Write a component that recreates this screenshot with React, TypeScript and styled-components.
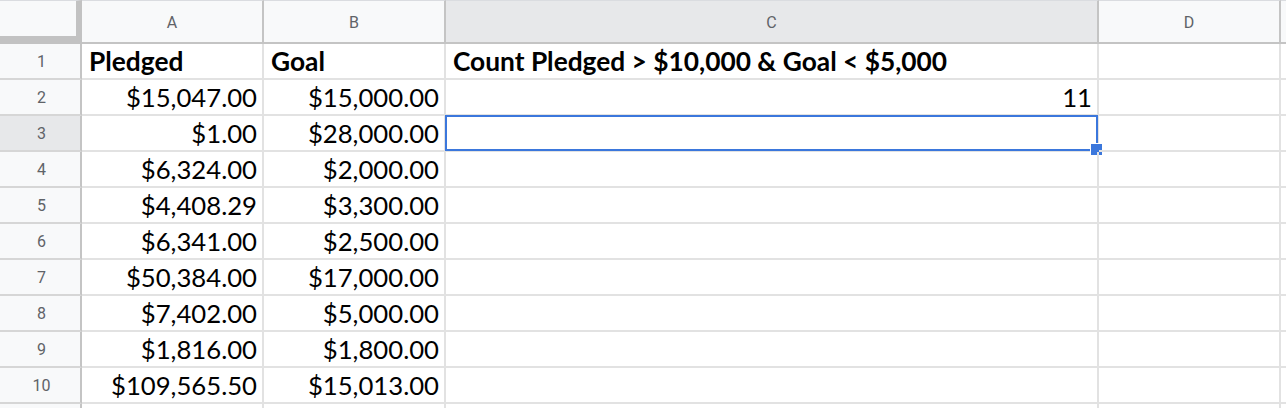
import React from "react"
import styled, { createGlobalStyle, css } from "styled-components"

const GlobalStyle = createGlobalStyle`
    html, body {
        margin: 0;
        padding: 0;
        background: #ffffff;
        overflow: hidden;
    }
    * { box-sizing: border-box; }
`

const headerBorder = "#c4c4c4"
const gridLine = "#e2e2e2"
const selectBlue = "#3b77dc"

const Sheet = styled.div`
    display: grid;
    grid-template-columns: 82px 182px 182px 653px 182px 1fr;
    grid-template-rows: 44px;
    grid-auto-rows: 36px;
    width: 1286px;
    height: 408px;
    overflow: hidden;
    font-family: "Lato", "Open Sans", sans-serif;
`

const Corner = styled.div`
    background: #f8f9fa;
    border-top: 1px solid #dadce0;
    border-right: 6px solid #c2c2c2;
    border-bottom: 8px solid #c2c2c2;
`

const ColHeader = styled.div<{ $active?: boolean }>`
    display: flex;
    align-items: center;
    justify-content: center;
    background: ${p => (p.$active ? "#e7e8ea" : "#f8f9fa")};
    border-top: 1px solid #dadce0;
    border-right: 2px solid ${headerBorder};
    border-bottom: 2px solid ${headerBorder};
    color: #5f6368;
    font-family: Roboto, "Liberation Sans", sans-serif;
    font-size: 16px;
    padding-top: 1px;
`

const RowHeader = styled.div<{ $active?: boolean }>`
    display: flex;
    align-items: center;
    justify-content: center;
    background: ${p => (p.$active ? "#e7e8ea" : "#f8f9fa")};
    border-right: 2px solid ${headerBorder};
    border-bottom: 2px solid #d6d6d6;
    color: #5f6368;
    font-family: Roboto, "Liberation Sans", sans-serif;
    font-size: 16px;
    padding-left: 3px;
`

const Cell = styled.div<{ $align?: "left" | "right"; $bold?: boolean }>`
    position: relative;
    display: flex;
    align-items: flex-end;
    justify-content: ${p => (p.$align === "right" ? "flex-end" : "flex-start")};
    border-right: 2px solid ${gridLine};
    border-bottom: 2px solid ${gridLine};
    padding: 0 5px 1px 7px;
    color: #000000;
    font-size: 25.7px;
    line-height: 31px;
    white-space: nowrap;
    ${p =>
        p.$bold &&
        css`
            font-weight: 700;
            font-size: 26.3px;
        `}
`

const Selection = styled.div`
    position: absolute;
    left: -1px;
    top: -1px;
    right: -1px;
    bottom: -1px;
    border: 2px solid ${selectBlue};
    pointer-events: none;
`

const FillHandle = styled.div`
    position: absolute;
    right: -7px;
    bottom: -7px;
    width: 13px;
    height: 13px;
    background: ${selectBlue};
    border: 1px solid #ffffff;
`

const columns = ["A", "B", "C", "D", ""]

const rows: [string, string, string][] = [
    ["Pledged", "Goal", "Count Pledged > $10,000 & Goal < $5,000"],
    ["$15,047.00", "$15,000.00", "11"],
    ["$1.00", "$28,000.00", ""],
    ["$6,324.00", "$2,000.00", ""],
    ["$4,408.29", "$3,300.00", ""],
    ["$6,341.00", "$2,500.00", ""],
    ["$50,384.00", "$17,000.00", ""],
    ["$7,402.00", "$5,000.00", ""],
    ["$1,816.00", "$1,800.00", ""],
    ["$109,565.50", "$15,013.00", ""],
    ["", "", ""],
]

const selectedRow = 2

export default function App() {
    return (
        <>
            <GlobalStyle />
            <Sheet>
                <Corner />
                {columns.map((c, i) => (
                    <ColHeader key={i} $active={c === "C"}>{c}</ColHeader>
                ))}

                {rows.map((r, i) => {
                    const header = i === 0
                    const visibleRow = i < 10
                    return (
                        <React.Fragment key={i}>
                            <RowHeader $active={i === selectedRow}>{visibleRow ? i + 1 : ""}</RowHeader>
                            <Cell $bold={header} $align={header ? "left" : "right"}>{r[0]}</Cell>
                            <Cell $bold={header} $align={header ? "left" : "right"}>{r[1]}</Cell>
                            <Cell $bold={header} $align={header ? "left" : "right"}>
                                {r[2]}
                                {i === selectedRow && (
                                    <Selection>
                                        <FillHandle />
                                    </Selection>
                                )}
                            </Cell>
                            <Cell />
                            <Cell />
                        </React.Fragment>
                    )
                })}
            </Sheet>
        </>
    )
}
